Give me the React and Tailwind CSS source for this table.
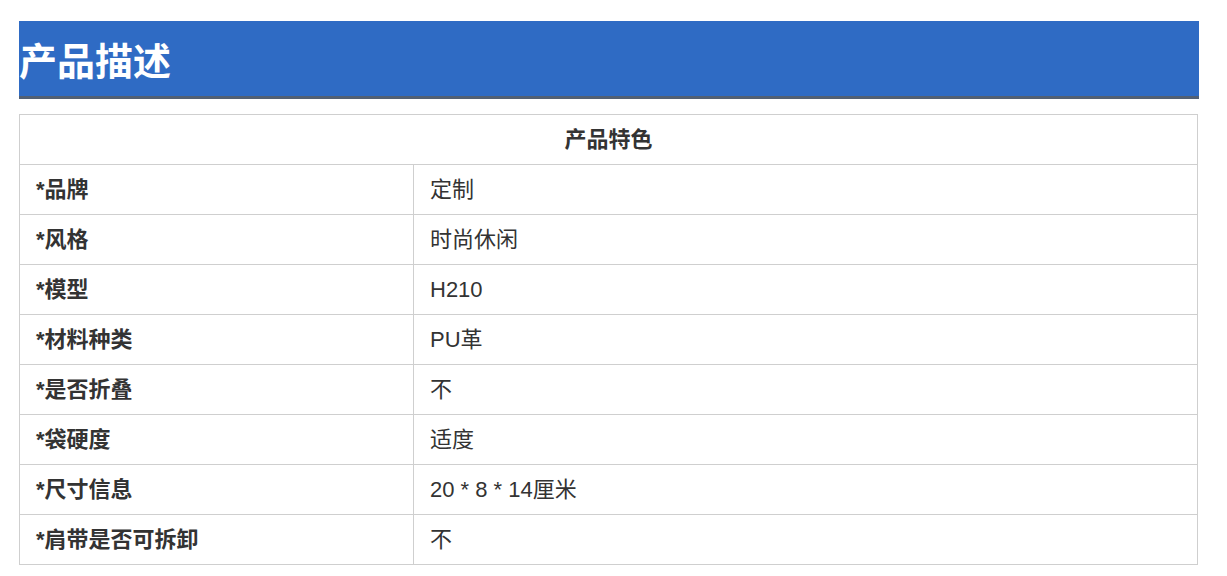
import React from "react";

const rows = [
  ["*品牌", "定制"],
  ["*风格", "时尚休闲"],
  ["*模型", "H210"],
  ["*材料种类", "PU革"],
  ["*是否折叠", "不"],
  ["*袋硬度", "适度"],
  ["*尺寸信息", "20 * 8 * 14厘米"],
  ["*肩带是否可拆卸", "不"],
];

const font = { fontFamily: '"Liberation Sans", "Noto Sans CJK SC", sans-serif' };

export default function App() {
  return (
    <div className="w-[1227px] h-[576px] bg-white pt-[21px] px-[19px] text-[#333]" style={font}>
      {/* Section header */}
      <div className="w-[1180px] h-[78px] bg-[#2f6bc4] border-b-[3px] border-[#526074] flex items-center pt-[6px]">
        <h2 className="text-[38px] font-bold text-white leading-none">产品描述</h2>
      </div>

      {/* Spec table */}
      <table className="mt-[15px] w-[1179px] border-collapse text-[22px]">
        <thead>
          <tr className="h-[50px]">
            <th colSpan={2} className="border border-[#cfcfcf] font-bold text-center">
              产品特色
            </th>
          </tr>
        </thead>
        <tbody>
          {rows.map(([label, value]) => (
            <tr key={label} className="h-[50px]">
              <td className="w-[394px] border border-[#cfcfcf] pl-[16px] font-bold">{label}</td>
              <td className="border border-[#cfcfcf] pl-[16px]">{value}</td>
            </tr>
          ))}
        </tbody>
      </table>
    </div>
  );
}
